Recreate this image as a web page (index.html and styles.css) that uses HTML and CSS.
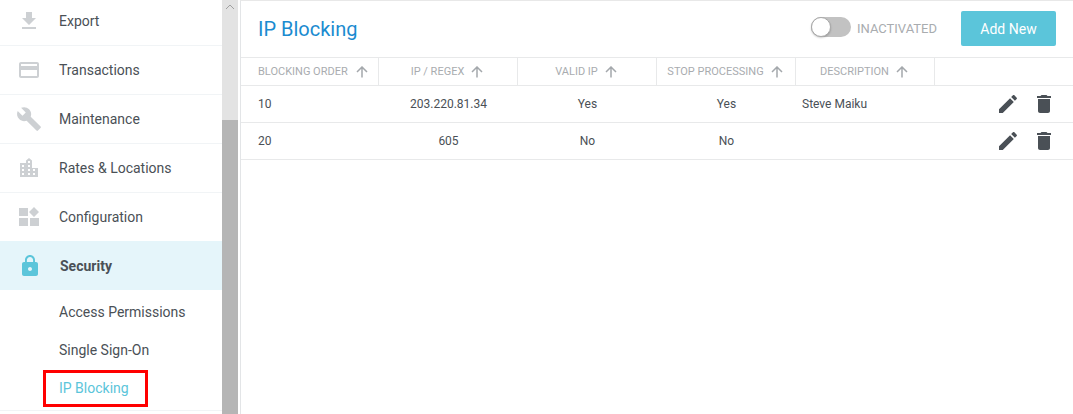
FILE: index.html
```html
<!DOCTYPE html>
<html lang="en">
<head>
<meta charset="utf-8">
<title>IP Blocking</title>
<link rel="stylesheet" href="styles.css">
</head>
<body>
<div class="app">
  <aside class="sidebar">
    <nav class="nav">
      <a class="nav-item"><span class="nav-icon"><svg width="24" height="24" viewBox="0 0 24 24"><path d="M19 9h-4V3H9v6H5l7 7 7-7zM5 18v2h14v-2H5z"/></svg></span>Export</a>
      <a class="nav-item"><span class="nav-icon"><svg width="24" height="24" viewBox="0 0 24 24"><path d="M20 4H4c-1.1 0-2 .9-2 2v12c0 1.1.9 2 2 2h16c1.1 0 2-.9 2-2V6c0-1.1-.9-2-2-2zm0 14H4v-6h16v6zm0-10H4V6h16v2z"/></svg></span>Transactions</a>
      <a class="nav-item"><span class="nav-icon"><svg width="26" height="26" viewBox="0 0 24 24"><path d="M22.7 19l-9.1-9.1c.9-2.3.4-5-1.5-6.9-2-2-5-2.4-7.4-1.3L9 6 6 9 1.600 4.700C.4 7.100.9 10.100 2.900 12.100c1.900 1.900 4.600 2.400 6.900 1.500l9.100 9.100c.4.400 1 .4 1.400 0l2.300-2.300c.5-.4.5-1.100.1-1.400z"/></svg></span>Maintenance</a>
      <a class="nav-item"><span class="nav-icon"><svg width="18" height="19" viewBox="0 0 18 19"><path fill-rule="evenodd" d="M9 0l3 2.500V10h6v9H0V5h6V2.500zM8 3v2h2V3zM2 7v2h2V7zm6 0v2h2V7zm-6 4v2h2v-2zm6 0v2h2v-2zm5 0v2h2v-2zm-11 4v2h2v-2zm6 0v2h2v-2zm5 0v2h2v-2z"/></svg></span>Rates &amp; Locations</a>
      <a class="nav-item"><span class="nav-icon"><svg width="20" height="20" viewBox="0 0 20 20"><path d="M0 1h9v8H0zM0 11h9v8H0zM11 11h9v8h-9zM15 0l5 5-5 5-5-5z"/></svg></span>Configuration</a>
      <a class="nav-item nav-item-active"><span class="nav-icon"><svg width="24" height="24" viewBox="0 0 24 24"><path d="M18 8h-1V6c0-2.760-2.240-5-5-5S7 3.240 7 6v2H6c-1.100 0-2 .9-2 2v10c0 1.100.9 2 2 2h12c1.100 0 2-.9 2-2V10c0-1.100-.9-2-2-2zm-6 9c-1.100 0-2-.9-2-2s.9-2 2-2 2 .9 2 2-.9 2-2 2zm3.100-9H8.900V6c0-1.710 1.390-3.100 3.100-3.100s3.100 1.390 3.100 3.100v2z"/></svg></span>Security</a>
      <div class="subnav">
        <a class="sub-item">Access Permissions</a>
        <a class="sub-item">Single Sign-On</a>
        <a class="sub-item sub-item-current">IP Blocking</a>
      </div>
    </nav>
  </aside>
  <div class="scrollbar">
    <div class="scroll-track"><svg class="scroll-arrow" width="10" height="6" viewBox="0 0 10 6"><path d="M1 5l4-4 4 4" fill="none" stroke="#a0a0a0"/></svg></div>
    <div class="scroll-thumb"></div>
  </div>
  <main class="main">
    <header class="head">
      <h1 class="title">IP Blocking</h1>
      <div class="toggle-wrap">
        <span class="toggle"><span class="knob"></span></span>
        <span class="toggle-label">INACTIVATED</span>
      </div>
      <button class="add">Add New</button>
    </header>
    <div class="row row-head">
      <div class="th th-left">BLOCKING ORDER<svg class="sort" width="12" height="12" viewBox="0 0 12 12"><path d="M6 11.500V1M1 6l5-5 5 5"/></svg></div>
      <div class="th">IP / REGEX<svg class="sort" width="12" height="12" viewBox="0 0 12 12"><path d="M6 11.500V1M1 6l5-5 5 5"/></svg></div>
      <div class="th">VALID IP<svg class="sort" width="12" height="12" viewBox="0 0 12 12"><path d="M6 11.500V1M1 6l5-5 5 5"/></svg></div>
      <div class="th">STOP PROCESSING<svg class="sort" width="12" height="12" viewBox="0 0 12 12"><path d="M6 11.500V1M1 6l5-5 5 5"/></svg></div>
      <div class="th">DESCRIPTION<svg class="sort" width="12" height="12" viewBox="0 0 12 12"><path d="M6 11.500V1M1 6l5-5 5 5"/></svg></div>
      <div class="th th-end"></div>
    </div>
    <div class="row">
      <div class="td td-left">10</div>
      <div class="td">203.220.81.34</div>
      <div class="td">Yes</div>
      <div class="td">Yes</div>
      <div class="td td-desc">Steve Maiku</div>
      <div class="td td-actions">
        <svg width="24" height="24" viewBox="0 0 24 24"><path d="M3 17.250V21h3.750L17.810 9.940l-3.750-3.750L3 17.250zM20.710 7.040c.39-.39.39-1.020 0-1.410l-2.340-2.340c-.39-.39-1.020-.39-1.410 0l-1.830 1.830 3.750 3.750 1.830-1.830z"/></svg>
        <svg width="24" height="24" viewBox="0 0 24 24"><path d="M6 19c0 1.100.9 2 2 2h8c1.100 0 2-.9 2-2V7H6v12zM19 4h-3.500l-1-1h-5l-1 1H5v2h14V4z"/></svg>
      </div>
    </div>
    <div class="row">
      <div class="td td-left">20</div>
      <div class="td">605</div>
      <div class="td">No</div>
      <div class="td">No</div>
      <div class="td td-desc"></div>
      <div class="td td-actions">
        <svg width="24" height="24" viewBox="0 0 24 24"><path d="M3 17.250V21h3.750L17.810 9.940l-3.750-3.750L3 17.250zM20.710 7.040c.39-.39.39-1.020 0-1.410l-2.340-2.340c-.39-.39-1.020-.39-1.410 0l-1.830 1.830 3.750 3.750 1.830-1.830z"/></svg>
        <svg width="24" height="24" viewBox="0 0 24 24"><path d="M6 19c0 1.100.9 2 2 2h8c1.100 0 2-.9 2-2V7H6v12zM19 4h-3.500l-1-1h-5l-1 1H5v2h14V4z"/></svg>
      </div>
    </div>
  </main>
</div>
</body>
</html>
```
FILE: styles.css
```css
*, *::before, *::after { box-sizing: border-box; }
html, body { margin: 0; height: 100%; overflow: hidden; background: #fff; }
body { font-family: Roboto, "Liberation Sans", sans-serif; color: #4a5056; }
.app { display: flex; height: 414px; width: 1073px; }

.sidebar { width: 222px; flex: none; overflow: hidden; }
.nav { margin-top: -3px; }
.nav-item {
  display: flex; align-items: center; height: 49px; padding-bottom: 1px;
  border-bottom: 1px solid #f1f4f6; font-size: 14px; color: #4a5056;
}
.nav-icon { width: 59px; flex: none; display: flex; justify-content: center; padding-right: 1px; }
.nav-icon svg { fill: #cdd0d3; display: block; }
.nav-item-active { background: #e5f5fa; font-weight: 700; border-bottom: 0; margin-top: -1px; padding-bottom: 0; }
.nav-item-active .nav-icon { width: 60px; }
.nav-item-active .nav-icon svg { fill: #5bc5da; }
.subnav { display: flex; flex-direction: column; padding-top: 3px; height: 121px; border-bottom: 1px solid #f1f4f6; }
.sub-item { height: 38px; flex: none; display: flex; align-items: center; padding-left: 59px; font-size: 14px; color: #4a5056; }
.sub-item-current { color: #5bc5da; position: relative; }
.sub-item-current::after {
  content: ""; position: absolute; left: 43px; top: 1px; width: 105px; height: 37px;
  border: 3px solid #f00;
}

.scrollbar { width: 16px; flex: none; display: flex; flex-direction: column; }
.scroll-track { height: 120px; background: #e3e3e3; display: flex; justify-content: center; padding-top: 4px; }
.scroll-arrow { display: block; }
.scroll-thumb { flex: 1; background: #b5b5b5; }

.main { flex: 1; margin-left: 2px; border-left: 1px solid #e3e5e7; border-top: 1px solid #e8e8e8; min-width: 0; }
.head { display: flex; align-items: center; height: 56px; padding: 0 17px 1px 17px; }
.title { margin: 0; font-size: 20px; font-weight: 400; color: #1b8bd0; flex: 1; }
.toggle-wrap { display: flex; align-items: center; margin-right: 24px; }
.toggle { width: 40px; height: 20px; border-radius: 10px; background: #c2c2c2; display: block; margin-right: 6px; margin-bottom: 3px; }
.knob { display: block; width: 20px; height: 20px; border-radius: 50%; background: #fff; border: 1px solid #a8a8a8; box-shadow: 0 1px 2px rgba(0,0,0,.2); }
.toggle-label { font-size: 13px; color: #a9acaf; }
.add {
  width: 95px; height: 35px; border: 0; border-radius: 2px; background: #5bc5da; color: #fff;
  font: 400 14px Roboto, "Liberation Sans", sans-serif; padding: 0;
}

.row { display: grid; grid-template-columns: 138px 139px 139px 139px 139px 1fr; height: 37px; border-bottom: 1px solid #e8e9ea; }
.row-head { height: 29px; border-top: 1px solid #e8e9ea; }
.th {
  display: flex; align-items: center; justify-content: center; border-right: 1px solid #e8e9ea;
  font-size: 11px; color: #a9acaf; padding-right: 2px;
}
.th-left { justify-content: flex-start; padding: 0 0 0 17px; }
.th-end { border-right: 0; }
.sort { margin-left: 7px; fill: none; stroke: #a4a8ac; stroke-width: 1.500; flex: none; }
.th-left .sort { margin-left: 8px; }
.td { display: flex; align-items: center; justify-content: center; font-size: 12px; color: #4a5056; }
.td-left { justify-content: flex-start; padding-left: 17px; }
.td-desc { justify-content: flex-start; padding-left: 6px; }
.td-actions { justify-content: flex-end; gap: 12px; padding-right: 17px; }
.td-actions svg { fill: #4a5056; display: block; }
```
